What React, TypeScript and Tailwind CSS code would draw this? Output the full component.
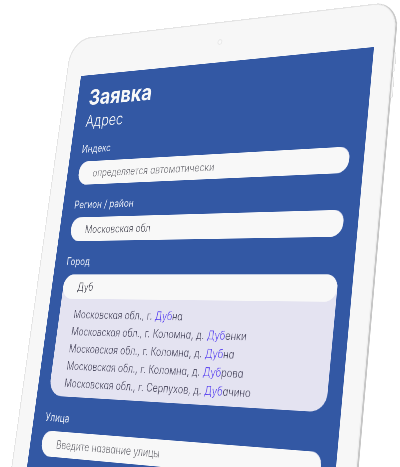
import React from "react";

type Suggestion = { before: string; match: string; after: string };

const suggestions: Suggestion[] = [
  { before: "Московская обл., г. ", match: "Дуб", after: "на" },
  { before: "Московская обл., г. Коломна, д. ", match: "Дуб", after: "енки" },
  { before: "Московская обл., г. Коломна, д. ", match: "Дуб", after: "на" },
  { before: "Московская обл., г. Коломна, д. ", match: "Дуб", after: "рова" },
  { before: "Московская обл., г. Серпухов, д. ", match: "Дуб", after: "ачино" },
];

const inputClass =
  "block h-[42px] w-full rounded-full bg-[#f8f8f8] px-8 text-[18px] font-light text-[#4f4f5a] outline-none placeholder:text-[#727278] placeholder:opacity-100 [font-feature-settings:'cv11']";

function Field({
  id,
  label,
  value,
  placeholder,
  children,
}: {
  id: string;
  label: string;
  value?: string;
  placeholder?: string;
  children?: React.ReactNode;
}) {
  return (
    <div className="flex flex-col gap-[10px]">
      <label htmlFor={id} className="text-[18px] leading-6 text-[#e4e9f4]">
        {label}
      </label>
      <div className="rounded-t-[21px] rounded-b-[28px] bg-[#e4e3f1]">
        <input id={id} type="text" defaultValue={value} placeholder={placeholder} className={inputClass} />
        {children}
      </div>
    </div>
  );
}

export default function App() {
  return (
    <main className="h-screen w-full overflow-hidden bg-white font-['Inter','Liberation_Sans',sans-serif]">
      {/* Tablet laid out flat, then turned in perspective as one object */}
      <div className="relative w-[670px] origin-top-left rounded-[44px] bg-[#f7f7f7] px-[35px] pb-[72px] shadow-[inset_2px_2px_0_#e4e4e4,inset_-2px_0_0_#f0f0f0,3px_0_0_#c6c6c6] [transform:matrix3d(0.40905,-0.0582967,0,-0.000211988,-0.081106,0.528528,0,-0.0000881778,0,0,1,0,72.523,39.986,0,1.0137684)]">
        <span className="absolute top-[84px] -right-[6px] h-[32px] w-[4px] rounded-r-sm border border-[#dedede] bg-[#f8f8f8]" />
        <span className="absolute top-[124px] -right-[6px] h-[34px] w-[4px] rounded-r-sm border border-[#dedede] bg-[#f8f8f8]" />
        <div className="flex h-[72px] items-center justify-center">
          <span className="size-[10px] rounded-full border-2 border-[#e9e9e9] bg-[#fafafa]" />
        </div>
        <form className="flex min-h-[820px] flex-col bg-[#3358a4] px-[26px] pt-[20px]">
          <h1 className="text-[40px] leading-[44px] font-bold text-[#f8f8f8]">Заявка</h1>
          <h2 className="mt-[4px] text-[28px] leading-9 font-light text-[#f8f8f8]">Адрес</h2>
          <div className="mt-[21px] flex flex-col gap-6">
            <Field id="index" label="Индекс" placeholder="определяется автоматически" />
            <Field id="region" label="Регион / район" value="Московская обл" />
            <Field id="city" label="Город" value="Дуб">
              <ul className="px-8 pt-3 pb-[8px] text-[18px] leading-[29px] font-light text-[#4c4a60] [font-feature-settings:'cv11']">
                {suggestions.map((s) => (
                  <li key={s.before + s.after}>
                    {s.before}
                    <mark className="bg-transparent text-[#5a44f0]">{s.match}</mark>
                    {s.after}
                  </li>
                ))}
              </ul>
            </Field>
            <Field id="street" label="Улица" placeholder="Введите название улицы" />
          </div>
        </form>
      </div>
    </main>
  );
}
